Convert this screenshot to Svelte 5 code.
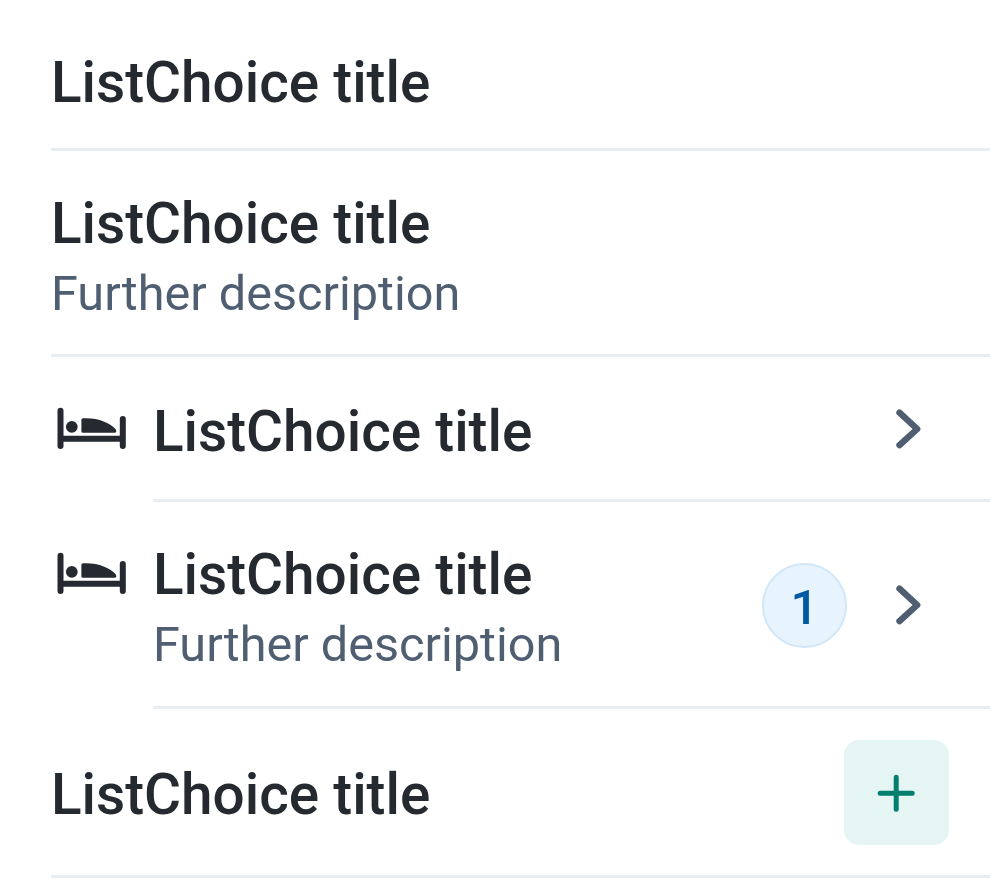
<script>
  const rows = [
    {},
    { desc: true },
    { bed: true, chevron: true },
    { desc: true, bed: true, badge: 1, chevron: true },
    { plus: true }
  ];
</script>

<main>
  {#each rows as row, i}
    <section class="row r{i}">
      {#if row.bed}
        <svg class="bed" viewBox="0 0 72 46" width="72" height="46" fill="none" stroke="#252a31" stroke-width="6" stroke-linecap="round">
          <path d="M4.5 5.7v35.3M4.5 33.7h62.3M66.8 14v27" />
          <circle cx="15.8" cy="21.8" r="5.9" fill="#252a31" stroke="none" />
          <path d="M25.4 26.2V15q0-1.5 1.6-1.7C42 12.5 53 17.5 59.5 24Q61.5 27.7 58.5 27.7H27Q25.4 27.7 25.4 26.2z" fill="#252a31" stroke="none" />
        </svg>
      {/if}
      <div class="body">
        <div class="text">
          <div class="title">ListChoice title</div>
          {#if row.desc}<div class="desc">Further description</div>{/if}
        </div>
        {#if row.badge}<div class="badge"><span>{row.badge}</span></div>{/if}
        {#if row.chevron}
          <svg class="chevron" viewBox="0 0 30 44" width="30" height="44" fill="none" stroke="#4f5e71" stroke-width="6.4" stroke-linecap="round" stroke-linejoin="round"><path d="M5.5 6.7L23.200 23L5.500 39.200" /></svg>
        {/if}
        {#if row.plus}
          <div class="add"><svg viewBox="0 0 40 40" width="40" height="40" stroke="#007f6d" stroke-width="5" stroke-linecap="round"><path d="M20.200 4.200v32M4.200 20.200h32" /></svg></div>
        {/if}
      </div>
    </section>
  {/each}
</main>

<style>
  :global(body) { background: #fff; overflow: hidden; }
  main { width: 990px; height: 888px; padding-left: 51px; box-sizing: border-box; font-family: Roboto, sans-serif; }
  .row { display: flex; box-sizing: border-box; }
  .r0 { height: 151px; }
  .r1 { height: 206px; }
  .r2 { height: 145px; }
  .r3 { height: 207px; }
  .r4 { height: 169px; }
  .body { flex: 1; display: flex; align-items: center; border-bottom: 3px solid #e8edf1; }
  .text { flex: 1; padding-top: 11px; }
  .r0 .text { padding-top: 18px; }
  .r2 .text { padding-top: 8px; }
  .r4 .text { padding-top: 6px; }
  .title { font-size: 56.7px; line-height: 72px; font-weight: 500; color: #252a31; white-space: nowrap; }
  .desc { margin-top: -1px; font-size: 48.6px; line-height: 70px; color: #4f5e71; white-space: nowrap; }
  .bed { width: 72px; margin: 48px 25px 0 5px; flex: none; }
  .chevron { margin: 0 66px 0 47px; }
  .badge { width: 85px; height: 85px; box-sizing: border-box; border: 2px solid #d0e6f9; background: #e8f4fd; border-radius: 50%; color: #005aa3; font-size: 49px; font-weight: 500; display: flex; align-items: center; justify-content: center; margin-top: 2px; }
  .badge span { padding-top: 4px; }
  .add { width: 105.5px; height: 105.5px; margin: 1px 41px 0 0; border-radius: 15px; background: #e5f5f3; display: flex; align-items: center; justify-content: center; }
</style>
